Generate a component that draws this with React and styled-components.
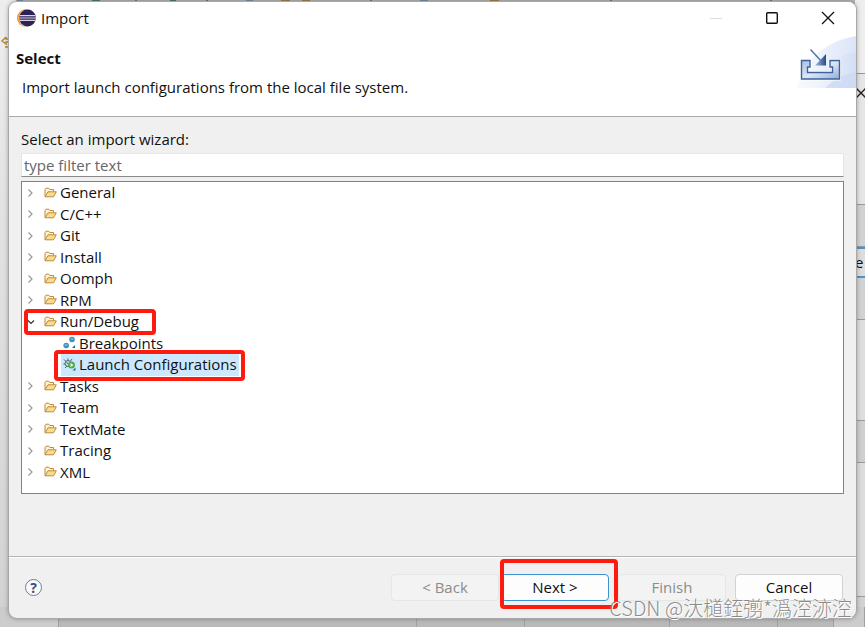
import React from 'react';
import styled, { createGlobalStyle } from 'styled-components';

const GlobalStyle = createGlobalStyle`
  * {
    box-sizing: border-box;
  }

  body {
    margin: 0;
    color: #111;
    font-family: "Open Sans", "Noto Sans", sans-serif;
    font-size: 15px;
    line-height: 20px;
  }

  button, input {
    font: inherit;
  }
`;

const wizards = [
  { name: 'General' },
  { name: 'C/C++' },
  { name: 'Git' },
  { name: 'Install' },
  { name: 'Oomph' },
  { name: 'RPM' },
  { name: 'Run/Debug', open: true, marked: true },
  { name: 'Breakpoints', icon: 'breakpoints', child: true },
  { name: 'Launch Configurations', icon: 'launch', child: true, selected: true, marked: true },
  { name: 'Tasks' },
  { name: 'Team' },
  { name: 'TextMate' },
  { name: 'Tracing' },
  { name: 'XML' },
];

const EclipseLogo = () => (
  <svg width="20" height="18" viewBox="0 0 20 18" aria-hidden="true">
    <circle cx="9" cy="9" r="9" fill="#f0963a" />
    <circle cx="10.500" cy="9" r="8.800" fill="#fff" />
    <circle cx="10.500" cy="9" r="8.400" fill="#2c2255" />
    <path d="M2.500 6.600h16M2 9h17M2.500 11.400h16" stroke="#d9d6ea" strokeWidth="1.100" />
  </svg>
);

const BannerArt = () => (
  <svg width="59" height="52" viewBox="0 0 59 52" aria-hidden="true">
    <defs>
      <linearGradient id="sky" x1="0" x2="1" y1="0" y2="0">
        <stop offset="0" stopColor="#f7f9fe" />
        <stop offset="1" stopColor="#d0dcf5" />
      </linearGradient>
      <linearGradient id="tray" x1="0" x2="1" y1="0" y2="1">
        <stop offset="0" stopColor="#a9bfdf" />
        <stop offset="0.5" stopColor="#dce7f5" />
        <stop offset="1" stopColor="#93add3" />
      </linearGradient>
      <linearGradient id="head" x1="0" x2="1" y1="0" y2="0">
        <stop offset="0" stopColor="#a5bbdc" />
        <stop offset="1" stopColor="#254a8c" />
      </linearGradient>
    </defs>
    <path d="M0 52C4 35 16 8 59 0v52z" fill="url(#sky)" opacity="0.75" />
    <path d="M12 52C18 36 34 20 59 16v36z" fill="url(#sky)" opacity="0.7" />
    <path d="M28 52C36 44 46 38 59 36v16z" fill="#cad8f3" opacity="0.7" />
    <path
      d="M4.500 24.500h8.500v6.500h-2.500v5.500h25v-5.500h-2.500v-6.500h9.500v18.500h-38z"
      fill="none"
      stroke="#fff"
      strokeWidth="3"
    />
    <path
      d="M4.500 24.500h8.500v6.500h-2.500v5.500h25v-5.500h-2.500v-6.500h9.500v18.500h-38z"
      fill="url(#tray)"
      stroke="#3d629f"
      strokeWidth="1.400"
    />
    <path d="M13.500 13.500l12 13" stroke="#4f70a8" strokeWidth="1.400" />
    <path d="M29 18v11.500H18z" fill="url(#head)" />
  </svg>
);

const Chevron = ({ open }) => (
  <svg width="8" height="10" viewBox="0 0 8 10" fill="none" aria-hidden="true">
    {open
      ? <path d="M1 3.500l3 3 3-3" stroke="#333" strokeWidth="1.200" />
      : <path d="M1.500 1.500L5 5 1.500 8.500" stroke="#999" strokeWidth="1.200" />}
  </svg>
);

const FolderIcon = () => (
  <svg width="13" height="11" viewBox="0 0 13 11" strokeLinejoin="round" aria-hidden="true">
    <path d="M1 9.500v-7L2 1.200h2.800l1 1.300h3.700v2" fill="#fdf3d3" stroke="#bd8a3e" />
    <path d="M1 9.800l3-5h8.300l-2.800 5z" fill="#fbdc8c" stroke="#bd8a3e" />
  </svg>
);

const BreakpointsIcon = () => (
  <svg width="13" height="13" viewBox="0 0 13 13" aria-hidden="true">
    <circle cx="9" cy="3.500" r="2.800" fill="#3f8fbd" />
    <circle cx="3.200" cy="9.500" r="2.800" fill="#3f8fbd" />
    <path d="M7.500 3h3M1.700 9h3" stroke="#a5d2e8" />
    <path d="M12 9v3H9z" fill="#176aa0" />
  </svg>
);

const LaunchIcon = () => (
  <svg width="13" height="13" viewBox="0 0 13 13" fill="none" aria-hidden="true">
    <path d="M1 1.500l2 2M5 .5v2M.5 6h2M2 10l2-2M9 1L7.500 3" stroke="#4b6671" />
    <circle cx="5" cy="5.500" r="3" fill="#c8dfd9" stroke="#4b6671" />
    <path d="M3.500 4l3 3.500" stroke="#4b6671" />
    <circle cx="8.500" cy="7" r="3.500" fill="#54aa50" />
    <path d="M7.500 5v4l3-2z" fill="#fff" />
    <path d="M12.500 9.500v3h-3z" fill="#176aa0" />
  </svg>
);

const icons = { breakpoints: BreakpointsIcon, launch: LaunchIcon };

const TreeItem = ({ name, icon, child, open, selected, marked }) => {
  const Icon = icons[icon] || FolderIcon;
  return (
    <Row role="treeitem" aria-level={child ? 2 : 1} aria-selected={!!selected} $child={child}>
      {!child && <Chevron open={open} />}
      <RowLabel $child={child} $selected={selected}>
        <Icon />
        {name}
        {marked && <RowMark $child={child} />}
      </RowLabel>
    </Row>
  );
};

const App = () => (
  <Desktop>
    <GlobalStyle />
    <Backdrop aria-hidden="true">
      <TopEdge width="100%" height="3">
        <path d="M17 1h6M246 1h7M420 1h8" stroke="#7c8fa5" strokeWidth="2" />
        <path d="M92 1h8M170 1h6" stroke="#4f7d5c" strokeWidth="2" />
        <path d="M281 1h9M302 1h8M490 1h9" stroke="#a1804f" strokeWidth="2" />
        <path d="M135 1h2M206 1h2M370 1h2M610 1h2M770 1h2" stroke="#777" strokeWidth="2" />
      </TopEdge>
      <LeftEdge>
        <svg width="9" height="14" viewBox="0 0 9 14" fill="none" stroke="#bd8e35" strokeWidth="1.500">
          <path d="M6 1L2 5l4 3V6h3M6 1v2h3M5 11h4" />
        </svg>
      </LeftEdge>
      <RightEdge>
        <Band $size={74} $tone="#eee" />
        <Band $size={132} $tone="#e6e6e6">
          <CloseGlyph width="12" height="14" viewBox="0 0 12 14">
            <path d="M0 1l12 12M0 13L12 1" stroke="#222" strokeWidth="1.500" />
          </CloseGlyph>
        </Band>
        <Band $size={42} $tone="#d2d2d2" />
        <Band $size={27} $tone="#ddd" $focus>e</Band>
        <Band $size={42} $tone="#d2d2d2" />
        <Band $size={102} $tone="#dedede" />
        <Band $size={41} $tone="#cfcfcf" />
        <Band $size={136} $tone="#dcdcdc" />
        <Band $size={29} $tone="#d2d2d2" />
      </RightEdge>
      <BottomEdge>
        <BottomCell $grow={58} $light />
        <BottomCell $grow={360} />
        <BottomCell $grow={108} />
        <BottomCell $grow={145} />
        <BottomCell $grow={108} />
        <BottomCell $grow={56} />
        <BottomCell $grow={30} $light />
      </BottomEdge>
    </Backdrop>

    <Dialog role="dialog" aria-labelledby="dialog-title">
      <TitleBar>
        <EclipseLogo />
        <Title id="dialog-title">Import</Title>
        <WindowButton type="button" aria-label="Minimize" disabled>
          <svg width="14" height="14"><path d="M1 7.500h12" stroke="#ddd" /></svg>
        </WindowButton>
        <WindowButton type="button" aria-label="Maximize">
          <svg width="14" height="14" fill="none">
            <rect x="1.700" y="1.700" width="10.600" height="10.600" rx="1" stroke="#111" strokeWidth="1.400" />
          </svg>
        </WindowButton>
        <WindowButton type="button" aria-label="Close">
          <svg width="14" height="14"><path d="M1 1l12 12M13 1L1 13" stroke="#111" strokeWidth="1.300" /></svg>
        </WindowButton>
      </TitleBar>

      <Banner>
        <BannerText>
          <Heading>Select</Heading>
          <Description>Import launch configurations from the local file system.</Description>
        </BannerText>
        <BannerArt />
      </Banner>

      <Content>
        <FilterLabel htmlFor="filter">Select an import wizard:</FilterLabel>
        <Filter id="filter" type="text" placeholder="type filter text" />
        <Tree role="tree" aria-label="Import wizards">
          {wizards.map((wizard) => <TreeItem key={wizard.name} {...wizard} />)}
        </Tree>
      </Content>

      <Footer>
        <HelpButton type="button" aria-label="Help">?</HelpButton>
        <StepButtons>
          <Button type="button" disabled>&lt; Back</Button>
          <NextSlot>
            <Button type="button" $primary>Next &gt;</Button>
            <NextMark />
          </NextSlot>
        </StepButtons>
        <Button type="button" disabled>Finish</Button>
        <Button type="button">Cancel</Button>
      </Footer>
    </Dialog>
    <Watermark>CSDN @汏檤銍彅*潙涳洂涳</Watermark>
  </Desktop>
);

export default App;

const Desktop = styled.div`
  position: relative;
  display: flex;
  min-height: 100vh;
  padding: 1px 8px 8px;
  overflow: hidden;
`;

const Backdrop = styled.div`
  position: absolute;
  inset: 0;
  background: #bdbdbd;
`;

const TopEdge = styled.svg`
  position: absolute;
  top: 0;
  left: 0;
  background: #b5b5b5;
`;

const LeftEdge = styled.div`
  position: absolute;
  top: 0;
  bottom: 0;
  left: 0;
  width: 16px;
  padding-top: 34px;
  background: linear-gradient(#eee, #e4e4e4 30%, #d2d2d2);
`;

const RightEdge = styled.div`
  position: absolute;
  top: 0;
  right: 0;
  bottom: 0;
  width: 10px;
  display: flex;
  flex-direction: column;
`;

const Band = styled.div`
  flex: ${({ $size }) => $size} 0 0;
  min-height: 0;
  display: flex;
  align-items: ${({ $focus }) => ($focus ? 'center' : 'flex-start')};
  border-bottom: ${({ $focus }) => ($focus ? '2px solid #4b93cc' : '1px solid #999')};
  border-top: ${({ $focus }) => ($focus ? '2px solid #4b93cc' : 0)};
  background: ${({ $tone }) => $tone};
`;

const CloseGlyph = styled.svg`
  flex: none;
  margin-top: 12px;
`;

const BottomEdge = styled.div`
  position: absolute;
  right: 0;
  bottom: 0;
  left: 0;
  height: 20px;
  display: flex;
`;

const BottomCell = styled.div`
  flex: ${({ $grow }) => $grow} 0 0;
  border-right: 1px solid #a0a0a0;
  background: ${({ $light }) => ($light ? '#ccc' : '#b9b9b9')};
`;

const Dialog = styled.div`
  position: relative;
  flex: 1;
  min-width: 0;
  display: flex;
  flex-direction: column;
  overflow: hidden;
  border: 1px solid #a8a8a8;
  border-radius: 9px;
  background: #f0f0f0;
  box-shadow: 0 0 4px rgba(0, 0, 0, 0.3);
`;

const TitleBar = styled.div`
  display: flex;
  align-items: center;
  height: 31px;
  padding-left: 8px;
  background: #fff;
`;

const Title = styled.div`
  flex: 1;
  padding-left: 4px;
`;

const WindowButton = styled.button`
  display: flex;
  align-items: center;
  justify-content: center;
  width: 56px;
  height: 32px;
  padding: 0;
  border: 0;
  background: transparent;
`;

const Banner = styled.div`
  display: flex;
  justify-content: space-between;
  height: 84px;
  padding-top: 3px;
  border-bottom: 1px solid #aaa;
  background: #fff;
`;

const BannerText = styled.div`
  padding: 12px 0 0 7px;
`;

const Heading = styled.h1`
  margin: 0;
  font-size: 15px;
  line-height: 20px;
`;

const Description = styled.p`
  margin: 9px 0 0 6px;
`;

const Content = styled.div`
  flex: 1;
  display: flex;
  flex-direction: column;
  padding: 12px 12px 62px;
`;

const FilterLabel = styled.label`
  height: 24px;
`;

const Filter = styled.input`
  width: 100%;
  height: 24px;
  padding: 0 2px 1px;
  border: 1px solid #e6e6e6;
  border-bottom-color: #8a8a8a;
  outline: 0;
  background: #fff;

  &::placeholder {
    color: #666;
    opacity: 1;
  }
`;

const Tree = styled.ul`
  flex: 1;
  display: flex;
  flex-direction: column;
  margin: 4px 0 0;
  padding: 0 0 10px;
  border: 1px solid #828282;
  background: #fff;
  list-style: none;
`;

const Row = styled.li`
  flex: 1;
  display: flex;
  align-items: center;
  max-height: 24px;
  padding-left: ${({ $child }) => ($child ? '39px' : '5px')};
`;

const RowLabel = styled.span`
  position: relative;
  display: flex;
  align-items: center;
  align-self: stretch;
  gap: 3px;
  margin-left: ${({ $child }) => ($child ? 0 : '7px')};
  padding: 0 2px 1px;
  line-height: 18px;
  background: ${({ $selected }) => ($selected ? '#cce8ff' : 'transparent')};
`;

const Mark = styled.span`
  position: absolute;
  z-index: 1;
  border: 4px solid #fd1b10;
  border-radius: 4px;
  pointer-events: none;
`;

const RowMark = styled(Mark)`
  inset: ${({ $child }) => ($child ? '-4px -6px -5px -7px' : '-2px -15px -2px -18px')};
`;

const Footer = styled.div`
  display: flex;
  align-items: center;
  gap: 9px;
  height: 62px;
  padding: 0 13px 0 16px;
  border-top: 1px solid #b4b4b4;
  box-shadow: inset 0 1px #fff;
`;

const HelpButton = styled.button`
  width: 17px;
  height: 17px;
  margin-right: auto;
  padding: 0;
  border: 1px solid #6d7fa0;
  border-radius: 50%;
  background: #f8f9fc;
  color: #3c5078;
  font-size: 14px;
  font-weight: 700;
  line-height: 15px;
`;

const StepButtons = styled.div`
  display: flex;
  gap: 2px;
`;

const Button = styled.button`
  width: 108px;
  height: 27px;
  padding: 0 0 1px;
  border: 1px solid ${({ $primary }) => ($primary ? '#3c91d0' : '#d2d2d2')};
  border-radius: 4px;
  background: #fdfdfd;
  color: #111;

  &:disabled {
    border-color: #e6e6e6;
    background: #f3f3f3;
    color: #8c8c8c;
  }
`;

const NextSlot = styled.div`
  position: relative;
  display: flex;
`;

const NextMark = styled(Mark)`
  inset: -15px -9px -8px -1px;
`;

const Watermark = styled.div`
  position: absolute;
  right: 13px;
  bottom: 7px;
  z-index: 2;
  color: rgba(120, 120, 120, 0.85);
  font-family: "Noto Sans CJK SC", sans-serif;
  font-size: 20px;
  font-weight: 300;
  line-height: 24px;
  text-shadow: 1px 1px #fff;
  white-space: nowrap;
`;
